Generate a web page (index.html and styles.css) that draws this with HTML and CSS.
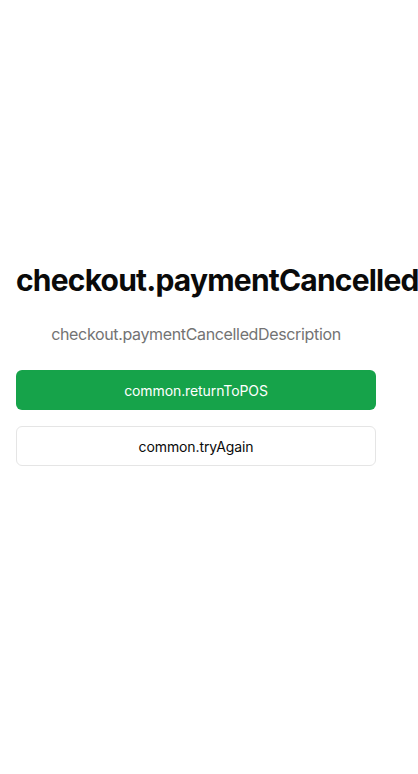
FILE: index.html
```html
<!DOCTYPE html>
<html lang="en">
<head>
<meta charset="utf-8">
<meta name="viewport" content="width=device-width, initial-scale=1">
<title>Payment cancelled</title>
<link rel="stylesheet" href="styles.css">
</head>
<body>
<main class="page">
  <section class="panel">
    <h1 class="title">checkout.paymentCancelled</h1>
    <p class="desc">checkout.paymentCancelledDescription</p>
    <div class="actions">
      <button class="btn btn-primary" type="button">common.returnToPOS</button>
      <button class="btn btn-outline" type="button">common.tryAgain</button>
    </div>
  </section>
</main>
</body>
</html>
```
FILE: styles.css
```css
html, body {
  margin: 0;
  padding: 0;
  background: #ffffff;
}
body {
  font-family: Inter, "Noto Sans", sans-serif;
  color: #0a0a0a;
  overflow: hidden;
}
.page {
  min-height: 774px;
  box-sizing: border-box;
  padding: 262px 16px 0;
}
.panel {
  width: 360px;
  display: flex;
  flex-direction: column;
  align-items: center;
  text-align: center;
}
.title {
  margin: 0;
  font-size: 30px;
  line-height: 36px;
  font-weight: 700;
  white-space: nowrap;
  align-self: flex-start;
  letter-spacing: -0.8px;
}
.desc {
  margin: 24px 0 0;
  font-size: 16px;
  line-height: 24px;
  color: #737373;
  letter-spacing: -0.35px;
}
.actions {
  margin-top: 24px;
  width: 100%;
  display: flex;
  flex-direction: column;
  gap: 16px;
}
.btn {
  height: 40px;
  width: 100%;
  border-radius: 6px;
  font-family: inherit;
  font-size: 14px;
  font-weight: 400;
  letter-spacing: -0.1px;
  cursor: pointer;
}
.btn-primary {
  background: #16a34a;
  color: #ffffff;
  border: none;
}
.btn-outline {
  background: #ffffff;
  color: #0a0a0a;
  border: 1px solid #e5e5e5;
}
```
